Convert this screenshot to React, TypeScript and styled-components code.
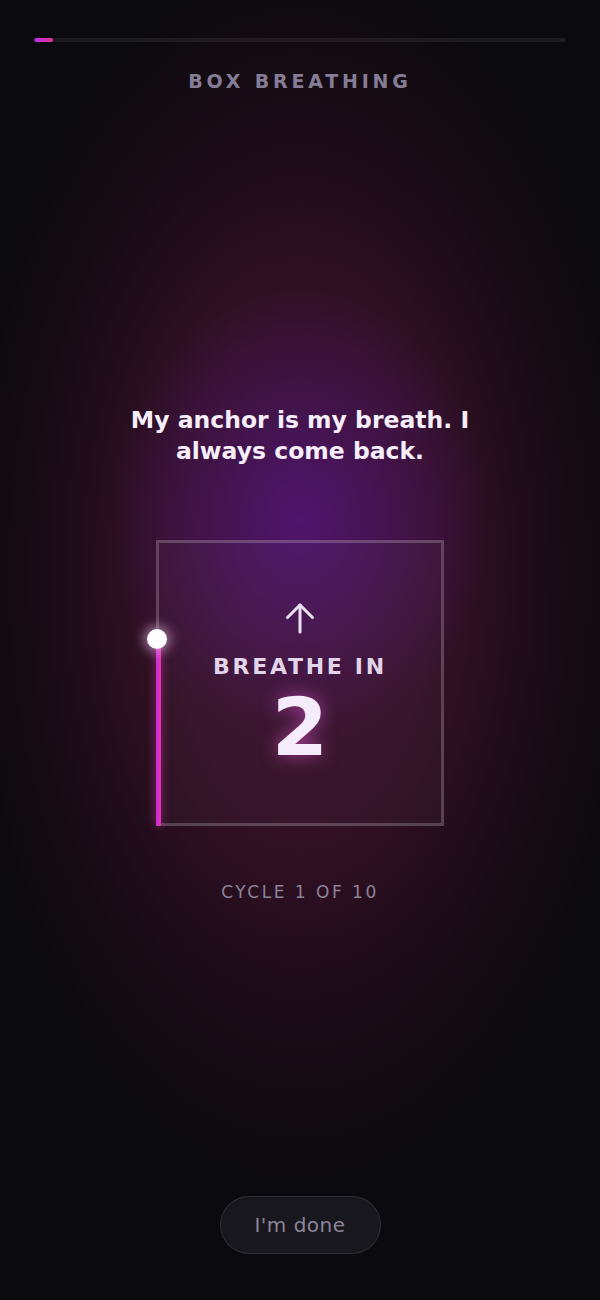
import styled, { createGlobalStyle } from "styled-components";

const GlobalStyle = createGlobalStyle`
    html, body {
        margin: 0;
        padding: 0;
        background: #0b0a0e;
    }
    * {
        box-sizing: border-box;
    }
`;

const Page = styled.div`
    position: relative;
    min-height: 1300px;
    display: flex;
    flex-direction: column;
    align-items: center;
    padding: 38px 34px 46px;
    font-family: "DejaVu Sans", "Noto Sans", sans-serif;
    background:
        radial-gradient(ellipse 190px 230px at 50% 40%, rgba(80, 22, 116, 0.9), rgba(80, 22, 116, 0) 100%),
        radial-gradient(ellipse 340px 610px at 50% 44%, #3c1229 0%, #341126 40%, rgba(28, 12, 23, 0.85) 75%, rgba(11, 10, 14, 0) 100%),
        #0b0a0e;
`;

const Track = styled.div`
    width: 100%;
    height: 4px;
    border-radius: 2px;
    background: rgba(255, 255, 255, 0.07);
    overflow: hidden;
`;

const Fill = styled.div`
    height: 100%;
    border-radius: 2px;
    background: linear-gradient(90deg, #b82ee6, #e8309c);
`;

const Title = styled.h1`
    margin: 28px 0 0;
    font-size: 19px;
    font-weight: 700;
    letter-spacing: 3.8px;
    color: #857c95;
`;

const Main = styled.main`
    flex: 1;
    display: flex;
    flex-direction: column;
    align-items: center;
    justify-content: center;
    padding-top: 18px;
`;

const Quote = styled.p`
    margin: 0;
    max-width: 380px;
    text-align: center;
    font-size: 23.5px;
    font-weight: 700;
    line-height: 31px;
    color: #f6eefa;
`;

const Square = styled.div`
    position: relative;
    margin-top: 73px;
    width: 288px;
    height: 286px;
    border: 3px solid rgba(255, 255, 255, 0.2);
    background: rgba(255, 255, 255, 0.025);
    display: flex;
    flex-direction: column;
    align-items: center;
    justify-content: center;
    padding-top: 4px;
`;

const Trail = styled.div`
    position: absolute;
    left: -3px;
    bottom: -3px;
    width: 5px;
    border-radius: 1px;
    background: linear-gradient(90deg, #c02ee0, #ec34a8);
    box-shadow: 0 0 10px rgba(230, 50, 190, 0.6);
`;

const Dot = styled.div`
    position: absolute;
    left: -12px;
    width: 20px;
    height: 20px;
    margin-top: -10px;
    border-radius: 50%;
    background: #ffffff;
    box-shadow: 0 0 12px 3px rgba(255, 210, 255, 0.55);
`;

const Arrow = styled.svg`
    width: 30px;
    height: 32px;
    color: #eadff1;
`;

const Phase = styled.div`
    margin-top: 20px;
    font-size: 22px;
    font-weight: 700;
    letter-spacing: 2.7px;
    color: #e2d4ea;
`;

const Count = styled.div`
    margin-top: 8px;
    font-size: 81px;
    font-weight: 700;
    line-height: 1;
    color: #f5ecfb;
    text-shadow: 0 0 18px rgba(230, 90, 220, 0.6);
`;

const Cycle = styled.div`
    margin-top: 56px;
    font-size: 17px;
    letter-spacing: 2.5px;
    color: #8c8298;
`;

const DoneButton = styled.button`
    width: 161px;
    height: 58px;
    border-radius: 29px;
    border: 1px solid rgba(255, 255, 255, 0.1);
    background: #18171d;
    color: #8b859b;
    font-family: "DejaVu Sans", sans-serif;
    font-size: 20px;
    letter-spacing: 0.5px;
    cursor: pointer;
`;

export default function App() {
    const progress = 3.6;
    const trail = 186;
    return (
        <>
            <GlobalStyle />
            <Page>
                <Track>
                    <Fill style={{ width: `${progress}%` }} />
                </Track>
                <Title>BOX BREATHING</Title>
                <Main>
                    <Quote>My anchor is my breath. I always come back.</Quote>
                    <Square>
                        <Trail style={{ height: trail }} />
                        <Dot style={{ bottom: trail - 12 }} />
                        <Arrow viewBox="0 0 30 32" fill="none" stroke="currentColor" strokeWidth="3" strokeLinecap="round" strokeLinejoin="round">
                            <path d="M15 30V3" />
                            <path d="M2.5 15.5 15 3l12.5 12.5" />
                        </Arrow>
                        <Phase>BREATHE IN</Phase>
                        <Count>2</Count>
                    </Square>
                    <Cycle>CYCLE 1 OF 10</Cycle>
                </Main>
                <DoneButton>I'm done</DoneButton>
            </Page>
        </>
    );
}
